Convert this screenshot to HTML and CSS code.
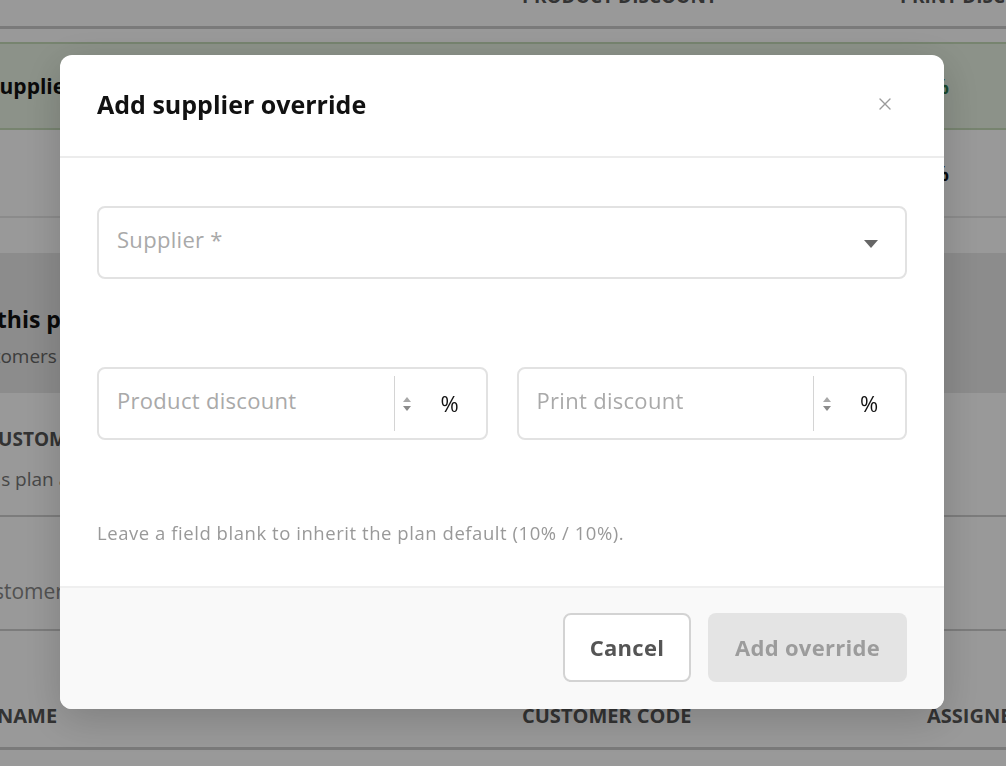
FILE: index.html
```html
<!DOCTYPE html>
<html lang="en">
<head>
<meta charset="utf-8">
<title>Add supplier override</title>
<link rel="stylesheet" href="styles.css">
</head>
<body>
<div class="page">
  <div class="table overrides">
    <div class="row head">
      <div class="c1"></div>
      <div class="c2"><span class="clip-up">PRODUCT DISCOUNT</span></div>
      <div class="c3"><span class="clip-up">PRINT DISCOUNT</span></div>
    </div>
    <div class="gap"></div>
    <div class="row body-row hl">
      <div class="c1"><span class="strong ind-supplier">Supplier override</span></div>
      <div class="c2"><span class="val">12%</span></div>
      <div class="c3"><span class="val green">10%</span></div>
    </div>
    <div class="row body-row">
      <div class="c1"></div>
      <div class="c2"><span class="val">10%</span></div>
      <div class="c3"><span class="val">15%</span></div>
    </div>
    <div class="spacer"></div>
  </div>

  <section class="section-head">
    <h2 class="sec-title">Customers on this plan</h2>
    <p class="sec-sub">Assign customers to this plan</p>
  </section>

  <div class="cust-block">
    <div class="cust-label">CUSTOMERS</div>
    <div class="cust-desc">Customers on this plan automatically get its discounts.</div>
  </div>

  <div class="search-row"><span class="search-ph">Search customers</span></div>

  <div class="row cust-head">
    <div class="c1"><span class="name-h">NAME</span></div>
    <div class="c2b">CUSTOMER CODE</div>
    <div class="c3">ASSIGNED</div>
  </div>
</div>

<div class="overlay">
  <div class="modal" role="dialog" aria-labelledby="mtitle">
    <div class="modal-head">
      <h1 id="mtitle" class="modal-title">Add supplier override</h1>
      <button class="close" aria-label="Close">
        <svg width="12" height="12" viewBox="0 0 12 12"><path d="M1 1 L11 11 M11 1 L1 11" stroke="#9a9a9a" stroke-width="1.4" fill="none" stroke-linecap="round"/></svg>
      </button>
    </div>
    <div class="modal-body">
      <div class="field select">
        <span class="ph">Supplier *</span>
        <svg class="caret" width="14" height="8" viewBox="0 0 14 8"><path d="M0 0 H14 L7 8 Z" fill="#666"/></svg>
      </div>
      <div class="pair">
        <div class="field num">
          <span class="ph grow">Product discount</span>
          <span class="spin">
            <svg width="10" height="18" viewBox="0 0 10 18"><path d="M1 7 L5 2 L9 7 Z" fill="#a8a8a8"/><path d="M1 11 L5 16 L9 11 Z" fill="#8a8a8a"/></svg>
          </span>
          <span class="unit">%</span>
        </div>
        <div class="field num">
          <span class="ph grow">Print discount</span>
          <span class="spin">
            <svg width="10" height="18" viewBox="0 0 10 18"><path d="M1 7 L5 2 L9 7 Z" fill="#a8a8a8"/><path d="M1 11 L5 16 L9 11 Z" fill="#8a8a8a"/></svg>
          </span>
          <span class="unit">%</span>
        </div>
      </div>
      <p class="hint">Leave a field blank to inherit the plan default (10% / 10%).</p>
    </div>
    <div class="modal-foot">
      <button class="btn btn-cancel">Cancel</button>
      <button class="btn btn-add" disabled>Add override</button>
    </div>
  </div>
</div>
</body>
</html>
```

FILE: styles.css
```css
* { box-sizing: border-box; }
html, body { margin: 0; padding: 0; }
body {
  font-family: "Open Sans", Lato, "Liberation Sans", sans-serif;
  background: #fff;
  color: #111;
  width: 1006px;
  height: 766px;
  overflow: hidden;
}

/* ---------- background page ---------- */
.page { margin-left: -40px; width: 1100px; }
.row { display: flex; }
.c1 { width: 562px; flex: none; overflow: hidden; white-space: nowrap; }
.c2 { width: 378px; flex: none; white-space: nowrap; }
.c2b { width: 405px; flex: none; white-space: nowrap; }
.c3 { flex: 1; white-space: nowrap; }

.head {
  height: 29px;
  border-bottom: 3px solid #cbcbcb;
  overflow: hidden;
  font-weight: 700;
  font-size: 19px;
  color: #555;
}
.clip-up { display: block; margin-top: -17px; line-height: 26px; }
.gap { height: 13px; }
.body-row {
  height: 88px;
  align-items: center;
  border-bottom: 2px solid #e8e8e8;
  font-size: 21px;
}
.hl { background: #e9f3e4; border-top: 2px solid #c6dcba; border-bottom: 2px solid #c6dcba; }
.strong { font-weight: 700; color: #111; }
.ind-supplier { display: inline-block; margin-left: 28px; }
.val { font-weight: 700; color: #111; display: inline-block; margin-left: 6px; }
.green { color: #2f7a4a; }
.spacer { height: 35px; }

.section-head {
  background: #e9e9e9;
  height: 140px;
  padding-top: 50px;
  overflow: hidden;
  white-space: nowrap;
}
.sec-title { margin: 0 0 0 -128px; font-size: 23px; font-weight: 700; color: #111; line-height: 32px; }
.sec-sub { margin: 8px 0 0 -58px; font-size: 19px; color: #666; }

.cust-block { height: 124px; padding-top: 33px; border-bottom: 2px solid #cfcfcf; white-space: nowrap; overflow: hidden; }
.cust-label { margin-left: 26px; font-weight: 700; font-size: 19px; color: #555; }
.cust-desc { margin: 14px 0 0 -111px; font-size: 19px; color: #777; }

.search-row { height: 114px; display: flex; align-items: center; border-bottom: 2px solid #cfcfcf; white-space: nowrap; overflow: hidden; }
.search-ph { margin-left: -61px; font-size: 21px; color: #888; padding-top: 36px; }

.cust-head { height: 119px; align-items: flex-end; padding-bottom: 18px; border-bottom: 3px solid #cbcbcb; font-weight: 700; font-size: 20px; color: #555; }
.name-h { display: inline-block; margin-left: 37px; }

/* ---------- overlay & modal ---------- */
.overlay {
  position: fixed;
  inset: 0;
  background: rgba(0, 0, 0, 0.4);
  display: flex;
  align-items: center;
  justify-content: center;
}
.modal {
  width: 884px;
  height: 654px;
  background: #fff;
  border-radius: 12px;
  box-shadow: 0 10px 40px rgba(0, 0, 0, 0.18);
  display: flex;
  flex-direction: column;
  overflow: hidden;
  margin-left: -2px;
  margin-top: -2px;
}
.modal-head {
  height: 103px;
  flex: none;
  display: flex;
  align-items: center;
  justify-content: space-between;
  padding: 0 53px 4px 37px;
  border-bottom: 2px solid #ececec;
}
.modal-title { margin: 0; font-size: 25px; font-weight: 700; color: #111; }
.close { border: 0; background: none; padding: 0; width: 12px; height: 12px; display: flex; cursor: pointer; }

.modal-body {
  flex: 1;
  padding: 48px 37px 0 37px;
}
.field {
  height: 73px;
  border: 2px solid #e2e2e2;
  border-radius: 8px;
  display: flex;
  align-items: center;
  background: #fff;
}
.ph { font-size: 22px; letter-spacing: 0.3px; color: #a9a9a9; padding-left: 18px; padding-bottom: 8px; white-space: nowrap; }
.select { justify-content: space-between; padding-right: 27px; }
.caret { margin-top: 2px; }
.pair { display: flex; gap: 29px; margin-top: 88px; }
.num { flex: 1; align-items: stretch; }
.num .ph { display: flex; align-items: center; }
.grow { flex: 1; }
.spin {
  width: 26px;
  margin: 7px 0;
  border-left: 1px solid #d4d4d4;
  display: flex;
  align-items: center;
  justify-content: center;
}
.unit {
  width: 66px;
  display: flex;
  align-items: center;
  justify-content: center;
  font-size: 22px;
  color: #111;
  padding-right: 6px;
  padding-bottom: 2px;
}
.hint { margin: 80px 0 0; font-size: 18.5px; letter-spacing: 0.55px; color: #999; }

.modal-foot {
  height: 123px;
  flex: none;
  background: #f9f9f9;
  border-top: 2px solid #efefef;
  display: flex;
  justify-content: flex-end;
  align-items: center;
  gap: 17px;
  padding: 0 37px 2px;
}
.btn {
  height: 69px;
  border-radius: 8px;
  font-family: inherit;
  font-size: 22px;
  font-weight: 700;
  letter-spacing: 0.3px;
  padding: 0 0 2px;
}
.btn-cancel { width: 128px; background: #fff; border: 2px solid #d3d3d3; color: #555; }
.btn-add { width: 199px; background: #e4e4e4; border: 0; color: #9c9c9c; }
```
